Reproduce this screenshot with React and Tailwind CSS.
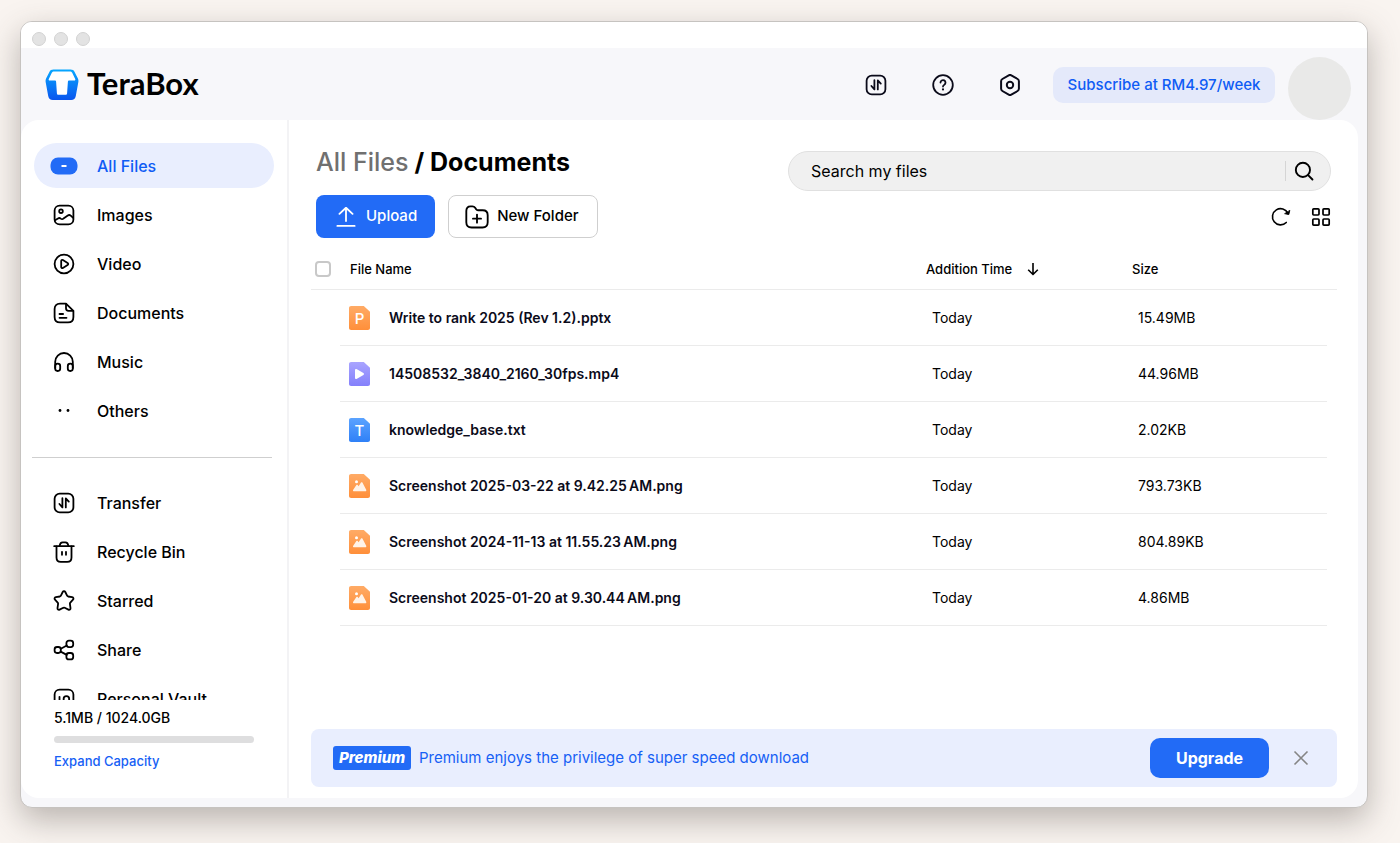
import { useState } from 'react';

const NAV_MAIN = [
  { id: 'all', label: 'All Files', icon: AllFilesIcon },
  { id: 'images', label: 'Images', icon: ImagesIcon },
  { id: 'video', label: 'Video', icon: VideoIcon },
  { id: 'documents', label: 'Documents', icon: DocumentsIcon },
  { id: 'music', label: 'Music', icon: MusicIcon },
  { id: 'others', label: 'Others', icon: OthersIcon },
];

const NAV_TOOLS = [
  { id: 'transfer', label: 'Transfer', icon: TransferIcon },
  { id: 'recycle', label: 'Recycle Bin', icon: TrashIcon },
  { id: 'starred', label: 'Starred', icon: StarIcon },
  { id: 'share', label: 'Share', icon: ShareIcon },
  { id: 'vault', label: 'Personal Vault', icon: VaultIcon },
];

// macOS puts a narrow no-break space before AM/PM in screenshot names
const FILES = [
  { name: 'Write to rank 2025 (Rev 1.2).pptx', kind: 'ppt', time: 'Today', size: '15.49MB' },
  { name: '14508532_3840_2160_30fps.mp4', kind: 'video', time: 'Today', size: '44.96MB' },
  { name: 'knowledge_base.txt', kind: 'text', time: 'Today', size: '2.02KB' },
  { name: 'Screenshot 2025-03-22 at 9.42.25\u202fAM.png', kind: 'image', time: 'Today', size: '793.73KB' },
  { name: 'Screenshot 2024-11-13 at 11.55.23\u202fAM.png', kind: 'image', time: 'Today', size: '804.89KB' },
  { name: 'Screenshot 2025-01-20 at 9.30.44\u202fAM.png', kind: 'image', time: 'Today', size: '4.86MB' },
];

const FILE_COLORS = {
  ppt: ['#ffab66', '#ff8f3a'],
  image: ['#ffab66', '#ff8f3a'],
  video: ['#a9a4ff', '#8480fb'],
  text: ['#5ba3ff', '#2f80f7'],
};

function Icon({ size = 22, width = 1.8, children }) {
  return (
    <svg
      width={size}
      height={size}
      viewBox="0 0 22 22"
      fill="none"
      stroke="currentColor"
      strokeWidth={width}
      strokeLinecap="round"
      strokeLinejoin="round"
      aria-hidden="true"
    >
      {children}
    </svg>
  );
}

function AllFilesIcon() {
  return (
    <svg width="28" height="18" viewBox="0 0 28 18" aria-hidden="true">
      <rect x="0.5" y="0.5" width="27" height="17" rx="7.5" fill="#226bf6" />
      <path d="M11.5 9h5" stroke="#fff" strokeWidth="1.8" />
    </svg>
  );
}

function ImagesIcon() {
  return (
    <Icon>
      <rect x="1.6" y="1.6" width="18.8" height="18.8" rx="5" />
      <circle cx="8" cy="7.2" r="1.8" />
      <path d="M2 16.2l3-1.8c1-.6 1.900-.5 2.700.2.900.7 1.900.7 2.800 0l4.300-3.100c1-.7 2-.6 2.900.2l2.500 2.200" />
    </Icon>
  );
}

function VideoIcon() {
  return (
    <Icon>
      <circle cx="11" cy="11" r="9.4" />
      <path d="M8.200 8c0-1 .8-1.500 1.700-1l4.700 2.900c.8.500.8 1.600 0 2.100l-4.700 2.900c-.9.500-1.700 0-1.700-1z" />
    </Icon>
  );
}

function DocumentsIcon() {
  return (
    <Icon>
      <path d="M13 1.600H7c-3.400 0-5.400 2-5.400 5.400v8c0 3.400 2 5.400 5.400 5.400h8c3.400 0 5.400-2 5.400-5.400V8.800z" />
      <path d="M13 1.800v4.500c0 1.600.9 2.500 2.500 2.500h4.700" />
      <path d="M6.500 12h3.600M6.500 15.800h7" />
    </Icon>
  );
}

function MusicIcon() {
  return (
    <Icon>
      <path d="M2.200 17V10.800a8.800 8.800 0 0 1 17.600 0V17" />
      <rect x="2.200" y="12.600" width="5" height="7.400" rx="2.400" />
      <rect x="14.800" y="12.600" width="5" height="7.400" rx="2.400" />
    </Icon>
  );
}

function OthersIcon() {
  return (
    <Icon>
      <circle cx="7" cy="10.500" r="1.400" fill="currentColor" stroke="none" />
      <circle cx="15" cy="10.500" r="1.400" fill="currentColor" stroke="none" />
    </Icon>
  );
}

function TransferIcon() {
  return (
    <Icon>
      <rect x="1.600" y="1.600" width="18.800" height="18.800" rx="5.200" />
      <path d="M9.400 6.200v9.200L6.400 12M12.800 15.400V6.400l3 3.200" />
    </Icon>
  );
}

function TrashIcon() {
  return (
    <Icon>
      <path d="M1.200 5.200h19.600" />
      <path d="M6.600 5c.3-2.200 1.300-3.700 3-3.700h2.800c1.700 0 2.700 1.500 3 3.700" />
      <path d="M3.500 5.400v11c0 3 1.500 4.400 4.300 4.400h6.400c2.800 0 4.300-1.400 4.300-4.400v-11" />
      <path d="M9 10.800v3M13 10.800v3" />
    </Icon>
  );
}

function StarIcon() {
  return (
    <Icon>
      <path d="M9.700 2c.6-1.100 2-1.100 2.600 0l1.800 3.700c.2.400.6.700 1 .8l4.100.7c1.300.2 1.700 1.600.8 2.500l-2.700 2.900c-.3.400-.5.800-.4 1.300l.6 4.200c.2 1.300-.9 2.100-2.100 1.500l-3.700-1.800c-.4-.2-.9-.2-1.400 0l-3.700 1.800c-1.200.6-2.300-.2-2.100-1.500l.6-4.200c.1-.5-.1-.9-.4-1.300L2 9.700c-.9-.9-.5-2.300.8-2.500l4.100-.7c.4-.1.800-.4 1-.8z" />
    </Icon>
  );
}

function ShareIcon() {
  return (
    <Icon>
      <rect x="1.600" y="8" width="6.200" height="6" rx="2.400" />
      <rect x="13.400" y="1.700" width="6.800" height="6.400" rx="2.500" />
      <rect x="13.400" y="14" width="6.800" height="6.400" rx="2.500" />
      <path d="M7.800 9.700l6-3.200M7.600 12.600l6.200 3.300" />
    </Icon>
  );
}

function VaultIcon() {
  return (
    <Icon>
      <rect x="1.600" y="1.600" width="18.800" height="18.800" rx="5" />
      <path d="M6.500 8.800v5" />
      <circle cx="13.400" cy="11" r="2.800" />
    </Icon>
  );
}

function HelpIcon() {
  return (
    <Icon>
      <circle cx="11" cy="11" r="9.800" />
      <path d="M8.500 8.600a2.500 2.500 0 1 1 3.800 2.100c-.9.500-1.300 1-1.300 1.900" />
      <circle cx="11" cy="15.400" r="1.100" fill="currentColor" stroke="none" />
    </Icon>
  );
}

function SettingsIcon() {
  return (
    <Icon width={2}>
      <path d="M9.700 1.300a2.600 2.600 0 0 1 2.600 0l6.300 3.700a2.600 2.600 0 0 1 1.300 2.200v7.600a2.600 2.600 0 0 1-1.300 2.200l-6.300 3.700a2.600 2.600 0 0 1-2.600 0L3.400 17a2.600 2.600 0 0 1-1.300-2.200V7.200A2.600 2.600 0 0 1 3.400 5z" />
      <circle cx="11" cy="11" r="3.200" />
    </Icon>
  );
}

function SearchIcon() {
  return (
    <Icon size={20} width={2.100}>
      <circle cx="9.800" cy="9.800" r="7.800" />
      <path d="M15.500 15.500l4.800 4.800" />
    </Icon>
  );
}

function RefreshIcon() {
  return (
    <Icon size={20} width={1.800}>
      <path d="M16.800 17A8.900 8.900 0 1 1 18.600 7" />
      <path d="M15.400 7.400l4.200.9 1-4.200z" fill="currentColor" strokeWidth="1" />
    </Icon>
  );
}

function GridIcon() {
  return (
    <Icon size={20} width={1.900}>
      <rect x="2" y="2" width="6.800" height="6.800" rx="1" />
      <rect x="13.200" y="2" width="6.800" height="6.800" rx="1" />
      <rect x="2" y="13.200" width="6.800" height="6.800" rx="1" />
      <rect x="13.200" y="13.200" width="6.800" height="6.800" rx="1" />
    </Icon>
  );
}

function UploadIcon() {
  return (
    <Icon size={20} width={2}>
      <path d="M11 15.500V.8M3.800 7.600L11 .8l7.200 6.800M1.500 20.800h19" />
    </Icon>
  );
}

function NewFolderIcon() {
  return (
    <Icon size={24} width={1.700}>
      <path d="M1.200 5.600c0-2.900 1.300-4.300 3.900-4.300h1.700c1.100 0 1.900.4 2.500 1.300l.9 1.300c.4.600 1 .9 1.700.9h4.300c3 0 4.600 1.600 4.600 4.600v6.400c0 3.200-1.500 4.800-4.800 4.800H6c-3.300 0-4.800-1.600-4.800-4.800z" />
      <path d="M11 8.800v7.400M7.300 12.500h7.400" />
    </Icon>
  );
}

function Logo() {
  return (
    <div className="flex items-start gap-2">
      <svg width="34" height="32" viewBox="0 0 34 32" aria-hidden="true">
        <defs>
          <linearGradient id="logo-fill" x1="0" y1="0" x2="0" y2="1">
            <stop offset="0" stopColor="#06a7ff" />
            <stop offset="1" stopColor="#0a55ee" />
          </linearGradient>
        </defs>
        <path
          fill="url(#logo-fill)"
          d="M8.500.5h17c2 0 3.300.7 4.100 2.400l3.200 6.300c.6 1.200.8 2.200.6 3.500l-2.600 14.400c-.5 2.700-2 4-4.600 4H7.800c-2.600 0-4.100-1.300-4.600-4L.6 12.700c-.2-1.300 0-2.300.6-3.500l3.200-6.300C5.200 1.200 6.500.5 8.500.5z"
        />
        <path
          fill="#fff"
          d="M9.200 2.400h15.600c1.200 0 1.900.4 2.400 1.400l3 6.200c.4.900.1 1.500-.9 1.500h-5c-.9 0-1.300.4-1.400 1.300l-.8 11.400c-.1 1.100-.6 1.600-1.700 1.600h-6.800c-1.100 0-1.600-.5-1.700-1.600l-.8-11.400c-.1-.9-.5-1.300-1.400-1.300h-5c-1 0-1.300-.6-.9-1.500l3-6.200c.5-1 1.200-1.400 2.400-1.400z"
        />
      </svg>
      <span className="font-['Lato',sans-serif] text-[31px] leading-7 font-bold">TeraBox</span>
    </div>
  );
}

function FileIcon({ kind }) {
  const [top, bottom] = FILE_COLORS[kind];
  const gradient = `file-${kind}`;
  return (
    <svg width="21" height="24" viewBox="0 0 21 24" className="shrink-0" aria-hidden="true">
      <defs>
        <linearGradient id={gradient} x1="0" y1="0" x2="0" y2="1">
          <stop offset="0" stopColor={top} />
          <stop offset="1" stopColor={bottom} />
        </linearGradient>
      </defs>
      <path fill={`url(#${gradient})`} d="M2.200 0h12.600L21 5.800v16c0 1.400-.8 2.200-2.200 2.200H2.200C.8 24 0 23.200 0 21.800V2.200C0 .8.800 0 2.200 0z" />
      {kind === 'video' && <path fill="#fff" d="M6 8c0-1 .7-1.300 1.500-.9l6.900 4c.8.500.8 1.300 0 1.800l-6.900 4c-.8.400-1.500.1-1.500-.9z" />}
      {kind === 'image' && (
        <>
          <circle cx="7.500" cy="7.800" r="1.500" fill="#fff" />
          <path fill="#fff3e8" d="M4.200 15.800l3.200-4.700c.4-.6.900-.6 1.300 0l.9 1.200 2.400-3.700c.4-.6 1-.6 1.400 0l3.800 7.200c.4.900 0 1.500-.9 1.500H5c-.9 0-1.300-.7-.8-1.500z" />
        </>
      )}
      {(kind === 'ppt' || kind === 'text') && (
        <text x="10.500" y="17.500" textAnchor="middle" fill="#fff" fontSize="15" fontWeight="500" fontFamily="Inter, sans-serif">
          {kind === 'ppt' ? 'P' : 'T'}
        </text>
      )}
    </svg>
  );
}

function NavItem({ item, active, onSelect }) {
  const ItemIcon = item.icon;
  return (
    <li>
      <button
        type="button"
        onClick={() => onSelect(item.id)}
        className={`flex h-[45px] w-full items-center gap-[19px] rounded-full pl-4 text-left text-base font-medium ${
          active ? 'bg-[#e9eefe] text-[#0f5cf5]' : 'text-black'
        }`}
      >
        <span className="flex w-7 justify-center">
          <ItemIcon />
        </span>
        {item.label}
      </button>
    </li>
  );
}

function Sidebar() {
  const [selected, setSelected] = useState('all');

  return (
    <aside className="flex w-[268px] shrink-0 flex-col border-r-2 border-[#f3f3f5]">
      <nav className="min-h-0 flex-1 overflow-hidden pt-[23px] pr-[13px] pl-[13px]">
        <ul className="flex flex-col gap-1">
          {NAV_MAIN.map((item) => (
            <NavItem key={item.id} item={item} active={item.id === selected} onSelect={setSelected} />
          ))}
        </ul>
        <hr className="mt-6 mr-0.5 mb-[22px] -ml-0.5 border-[#cfcfcf]" />
        <ul className="flex flex-col gap-1">
          {NAV_TOOLS.map((item) => (
            <NavItem key={item.id} item={item} active={item.id === selected} onSelect={setSelected} />
          ))}
        </ul>
      </nav>
      <div className="shrink-0 px-[33px] pt-2 pb-[27px]">
        <p className="text-sm leading-5 font-medium">5.1MB / 1024.0GB</p>
        <div className="my-2 h-[7px] rounded-full bg-[#dededf]" />
        <a href="#expand" className="block text-[13px] leading-5 font-medium text-[#1660f5]">
          Expand Capacity
        </a>
      </div>
    </aside>
  );
}

function Header() {
  return (
    <header className="flex h-[72px] shrink-0 items-center justify-between bg-[#f7f7fa] pt-0.5 pr-4 pl-6">
      <Logo />
      <div className="flex h-full items-center">
        <div className="mr-8 flex items-center gap-[45px] text-[#0b0b1a]">
          <button type="button" aria-label="Transfers"><TransferIcon /></button>
          <button type="button" aria-label="Help"><HelpIcon /></button>
          <button type="button" aria-label="Settings"><SettingsIcon /></button>
        </div>
        <button type="button" className="h-9 w-[222px] rounded-[10px] bg-[#e4e9fa] text-[15px] font-medium text-[#0f5cf5]">
          Subscribe at RM4.97/week
        </button>
        <button type="button" aria-label="Account" className="ml-[13px] size-[63px] self-end rounded-full bg-[#e9e9e8]" />
      </div>
    </header>
  );
}

function Toolbar() {
  return (
    <div className="flex justify-between gap-6 pr-1.5 pl-[5px]">
      <div className="pt-[22px]">
        <h1 className="text-[25px] leading-10 font-bold whitespace-nowrap">
          <a href="#all" className="font-medium text-[#707070]">All Files</a> / Documents
        </h1>
        <div className="mt-[13px] flex gap-[13px]">
          <button type="button" className="flex h-[43px] items-center gap-2.5 rounded-lg bg-[#226bf6] pr-[18px] pl-5 text-[15px] font-medium text-white">
            <UploadIcon />
            Upload
          </button>
          <button type="button" className="flex h-[43px] items-center gap-2 rounded-lg border border-[#cfcfcf] pr-[18px] pl-4 text-[15px] font-medium">
            <NewFolderIcon />
            New Folder
          </button>
        </div>
      </div>
      <div className="flex w-[543px] flex-col gap-4 pt-[31px]">
        <div className="flex h-10 items-center rounded-full border border-[#e0e0e0] bg-[#f0f0f0] pr-4 pl-[22px]">
          <input
            type="search"
            aria-label="Search my files"
            placeholder="Search my files"
            className="min-w-0 flex-1 bg-transparent text-base outline-none placeholder:text-black"
          />
          <button type="button" aria-label="Search" className="border-l border-[#d5d5d5] pl-2">
            <SearchIcon />
          </button>
        </div>
        <div className="flex justify-end gap-5">
          <button type="button" aria-label="Refresh"><RefreshIcon /></button>
          <button type="button" aria-label="Grid view"><GridIcon /></button>
        </div>
      </div>
    </div>
  );
}

function FileTable() {
  return (
    <table className="mt-[11px] w-full table-fixed border-separate border-spacing-0 text-left text-sm">
      <colgroup>
        <col className="w-[29px]" />
        <col />
        <col className="w-[206px]" />
        <col className="w-[205px]" />
        <col className="w-2.5" />
      </colgroup>
      <thead className="text-[13px]">
        <tr className="h-[41px] *:border-b *:border-[#ebebeb] *:font-medium">
          <th>
            <input
              type="checkbox"
              aria-label="Select all files"
              className="ml-1 block size-4 appearance-none rounded border-2 border-[#c8c8c8] bg-white"
            />
          </th>
          <th className="pl-2.5">File Name</th>
          <th className="pl-2.5">
            <button type="button" className="flex items-center gap-3.5">
              Addition Time
              <svg width="14" height="14" viewBox="0 0 14 14" fill="none" stroke="currentColor" strokeWidth="1.600" aria-hidden="true">
                <path d="M7 1v11.500M2.200 7.800L7 12.500l4.800-4.700" />
              </svg>
            </button>
          </th>
          <th className="pl-2.5">Size</th>
          <th aria-hidden="true" />
        </tr>
      </thead>
      <tbody>
        {FILES.map((file) => (
          <tr key={file.name} className="h-14">
            <td />
            <td className="border-b border-[#ebebeb] pl-[9px]">
              <div className="flex items-center gap-[19px]">
                <FileIcon kind={file.kind} />
                <span className="truncate font-semibold text-[#0b0b1a]">{file.name}</span>
              </div>
            </td>
            <td className="border-b border-[#ebebeb] pl-4">{file.time}</td>
            <td className="border-b border-[#ebebeb] pl-4">{file.size}</td>
            <td />
          </tr>
        ))}
      </tbody>
    </table>
  );
}

function PremiumBanner({ onClose }) {
  return (
    <div className="mt-auto mb-[11px] flex h-[58px] shrink-0 items-center rounded-lg bg-[#e9eefe] pr-7 pl-[22px]">
      <span className="w-[78px] rounded-[3px] bg-[#226bf6] text-center text-[15px] leading-6 font-extrabold text-white italic">
        Premium
      </span>
      <p className="ml-2 flex-1 text-[15px] text-[#1660f5]">Premium enjoys the privilege of super speed download</p>
      <button type="button" className="h-10 w-[119px] rounded-[10px] bg-[#226bf6] text-base font-bold text-white">
        Upgrade
      </button>
      <button type="button" aria-label="Close" onClick={onClose} className="ml-6 text-[#858585]">
        <svg width="16" height="16" viewBox="0 0 16 16" fill="none" stroke="currentColor" strokeWidth="1.600" aria-hidden="true">
          <path d="M1.500 1.500l13 13M14.500 1.500l-13 13" />
        </svg>
      </button>
    </div>
  );
}

export default function App() {
  const [showBanner, setShowBanner] = useState(true);

  return (
    <div className="flex h-screen flex-col bg-[#f9f4f0] pt-[21px] pr-8 pb-[35px] pl-5 font-['Inter',sans-serif] text-black">
      <div className="flex min-h-0 flex-1 flex-col overflow-hidden rounded-xl border border-[#c6c3c0] bg-[#f7f7fa] shadow-[0_12px_32px_rgba(70,60,55,0.35)]">
        <div className="flex h-[26px] shrink-0 items-end gap-2 bg-white pb-0.5 pl-[11px]">
          <span className="size-3.5 rounded-full border border-[#d2d2d2] bg-[#e3e3e3]" />
          <span className="size-3.5 rounded-full border border-[#d2d2d2] bg-[#e3e3e3]" />
          <span className="size-3.5 rounded-full border border-[#d2d2d2] bg-[#e3e3e3]" />
        </div>
        <Header />
        <div className="flex min-h-0 flex-1 pr-[9px] pb-[9px]">
          <div className="flex min-w-0 flex-1 overflow-hidden rounded-[18px] bg-white">
            <Sidebar />
            <main className="flex min-w-0 flex-1 flex-col pr-[21px] pl-[22px]">
              <Toolbar />
              <FileTable />
              {showBanner && <PremiumBanner onClose={() => setShowBanner(false)} />}
            </main>
          </div>
        </div>
      </div>
    </div>
  );
}
